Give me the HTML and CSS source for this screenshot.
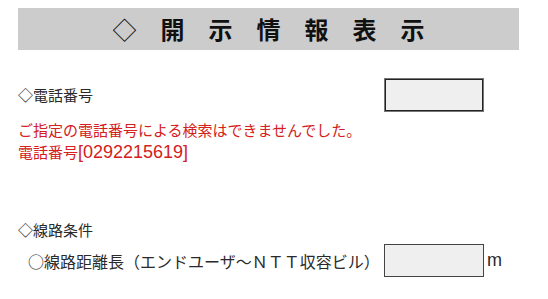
FILE: index.html
```html
<!DOCTYPE html>
<html lang="ja">
<head>
<meta charset="utf-8">
<title>開示情報表示</title>
<link rel="stylesheet" href="styles.css">
</head>
<body>
<div class="page">
  <div class="title"><span class="mark">◇</span>　開　示　情　報　表　示</div>
  <div class="row row-phone">
    <div class="label">◇電話番号</div>
    <input class="box box-focus" type="text">
  </div>
  <div class="err">
    <div>ご指定の電話番号による検索はできませんでした。</div>
    <div>電話番号<span class="num">[0292215619]</span></div>
  </div>
  <div class="section">◇線路条件</div>
  <div class="row row-dist">
    <div class="label label-sub">○線路距離長（エンドユーザ〜ＮＴＴ収容ビル）</div>
    <input class="box" type="text">
    <span class="unit">m</span>
  </div>
</div>
</body>
</html>
```
FILE: styles.css
```css
html, body {
  margin: 0;
  padding: 0;
  background: #ffffff;
}
body {
  font-family: "Noto Sans CJK JP", sans-serif;
  font-size: 15px;
  color: #2a2a2a;
}
.page {
  width: 501px;
  padding: 8px 0 0 18px;
}
.title {
  height: 42px;
  line-height: 42px;
  background: #cccccc;
  text-align: center;
  font-size: 24px;
  font-weight: bold;
  color: #111111;
  white-space: nowrap;
}
.title .mark {
  font-weight: normal;
}
.row {
  display: flex;
  align-items: center;
}
.row-phone {
  margin-top: 28px;
  height: 34px;
}
.label {
  width: 366px;
  line-height: 22px;
  white-space: nowrap;
}
.box {
  box-sizing: border-box;
  width: 100px;
  height: 33px;
  margin: 0;
  padding: 0;
  background: #efefef;
  border: 1px solid #444444;
  border-radius: 0;
  outline: none;
}
.box-focus {
  height: 34px;
  border: 1px solid #777777;
  box-shadow: inset 0 0 0 1px #222222;
}
.err {
  margin-top: 7px;
  color: #d42020;
  line-height: 22px;
}
.num {
  font-family: "Liberation Sans", Arial, sans-serif;
  font-size: 18px;
}
.section {
  margin-top: 56px;
  line-height: 22px;
}
.row-dist {
  margin-top: 3px;
  padding-left: 10px;
  height: 33px;
}
.label-sub {
  width: 356px;
  font-size: 16px;
}
.unit {
  margin-left: 3px;
  font-family: "Liberation Sans", Arial, sans-serif;
  font-size: 18px;
}
```
